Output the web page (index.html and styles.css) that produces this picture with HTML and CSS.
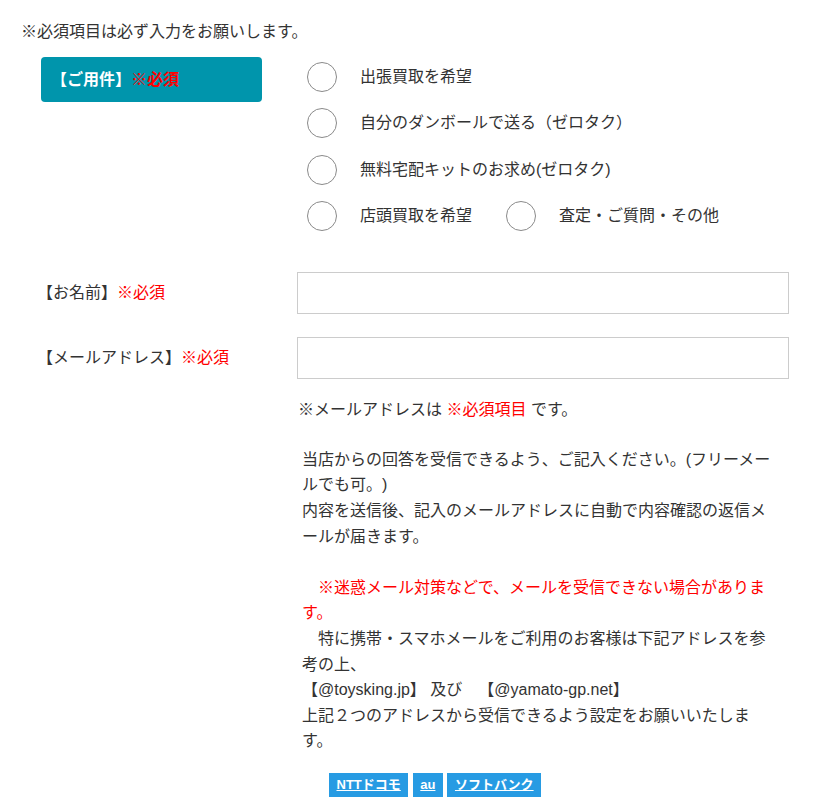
FILE: index.html
```html
<!DOCTYPE html>
<html lang="ja">
<head>
<meta charset="utf-8">
<title>お問い合わせフォーム</title>
<link rel="stylesheet" href="styles.css">
</head>
<body>
<div class="page">
  <p class="notice">※必須項目は必ず入力をお願いします。</p>

  <div class="row row-type">
    <div class="label-col">
      <div class="type-badge">【ご用件】<span class="req">※必須</span></div>
    </div>
    <div class="radios">
      <div class="radio-line">
        <label class="opt"><span class="circle"></span><span class="opt-text">出張買取を希望</span></label>
      </div>
      <div class="radio-line">
        <label class="opt"><span class="circle"></span><span class="opt-text">自分のダンボールで送る（ゼロタク）</span></label>
      </div>
      <div class="radio-line">
        <label class="opt"><span class="circle"></span><span class="opt-text">無料宅配キットのお求め(ゼロタク)</span></label>
      </div>
      <div class="radio-line">
        <label class="opt"><span class="circle"></span><span class="opt-text">店頭買取を希望</span></label>
        <label class="opt"><span class="circle"></span><span class="opt-text">査定・ご質問・その他</span></label>
      </div>
    </div>
  </div>

  <div class="row row-field row-name">
    <div class="label-col"><span class="label">【お名前】<span class="req">※必須</span></span></div>
    <div class="input-col"><div class="input"></div></div>
  </div>

  <div class="row row-field row-mail">
    <div class="label-col"><span class="label">【メールアドレス】<span class="req">※必須</span></span></div>
    <div class="input-col"><div class="input"></div></div>
  </div>

  <div class="row row-info">
    <div class="label-col"></div>
    <div class="info">
      <p class="mail-note">※メールアドレスは <span class="req">※必須項目</span> です。</p>
      <p class="mail-text">当店からの回答を受信できるよう、ご記入ください。(フリーメールでも可。)<br>内容を送信後、記入のメールアドレスに自動で内容確認の返信メールが届きます。<br><br><span class="req">　※迷惑メール対策などで、メールを受信できない場合があります。</span><br>　特に携帯・スマホメールをご利用のお客様は下記アドレスを参考の上、<br>【@toysking.jp】 及び　【@yamato-gp.net】<br>上記２つのアドレスから受信できるよう設定をお願いいたします。</p>
      <div class="carriers">
        <a class="carrier" href="#">NTTドコモ</a>
        <a class="carrier" href="#">au</a>
        <a class="carrier" href="#">ソフトバンク</a>
      </div>
    </div>
  </div>
</div>
</body>
</html>
```

FILE: styles.css
```css
html, body {
  margin: 0;
  padding: 0;
  background: #ffffff;
}

body {
  font-family: "Liberation Sans", "Noto Sans CJK JP", sans-serif;
  font-size: 16px;
  color: #333333;
  line-height: 25.6px;
  text-spacing-trim: space-all;
}

.page {
  width: 818px;
}

.notice {
  margin: 0;
  padding: 19px 0 0 21px;
  line-height: 25.6px;
}

.req {
  color: #ff0000;
}

.row {
  display: grid;
  grid-template-columns: 297px 492px;
}

/* ご用件 */
.row-type {
  margin-top: 12.4px;
}

.type-badge {
  margin-left: 41px;
  width: 221px;
  height: 45px;
  box-sizing: border-box;
  padding-left: 10px;
  display: flex;
  align-items: center;
  background: #0095ac;
  border-radius: 4px;
  color: #ffffff;
  font-weight: bold;
}

.radios {
  padding-top: 4.7px;
  display: flex;
  flex-direction: column;
  gap: 16.5px;
}

.radio-line {
  display: flex;
  align-items: center;
  height: 30px;
}

.opt {
  display: flex;
  align-items: center;
}

.opt + .opt {
  margin-left: 24px;
}

.circle {
  width: 30px;
  height: 30px;
  box-sizing: border-box;
  margin-left: 10px;
  border: 1.5px solid #8a8a8a;
  border-radius: 50%;
  background: #ffffff;
  flex: none;
}

.opt-text {
  margin-left: 23px;
  white-space: nowrap;
}

/* fields */
.row-field {
  align-items: center;
}

.row-name {
  margin-top: 40.8px;
}

.row-mail {
  margin-top: 23px;
}

.label {
  padding-left: 37px;
  white-space: nowrap;
}

.input {
  height: 42px;
  box-sizing: border-box;
  border: 1px solid #cccccc;
  background: #ffffff;
}

/* info block */
.mail-note {
  margin: 18px 0 0;
  padding-left: 1px;
}

.mail-text {
  margin: 24.2px 0 0;
  padding-left: 5px;
  width: 474px;
  line-break: loose;
}

.carriers {
  margin-top: 18.8px;
  padding-left: 32px;
  display: flex;
  gap: 4.5px;
}

.carrier {
  display: block;
  height: 24px;
  line-height: 24px;
  padding: 0 7.5px;
  background: #279be3;
  color: #ffffff;
  font-size: 13px;
  font-weight: bold;
  text-decoration: underline;
}
```
